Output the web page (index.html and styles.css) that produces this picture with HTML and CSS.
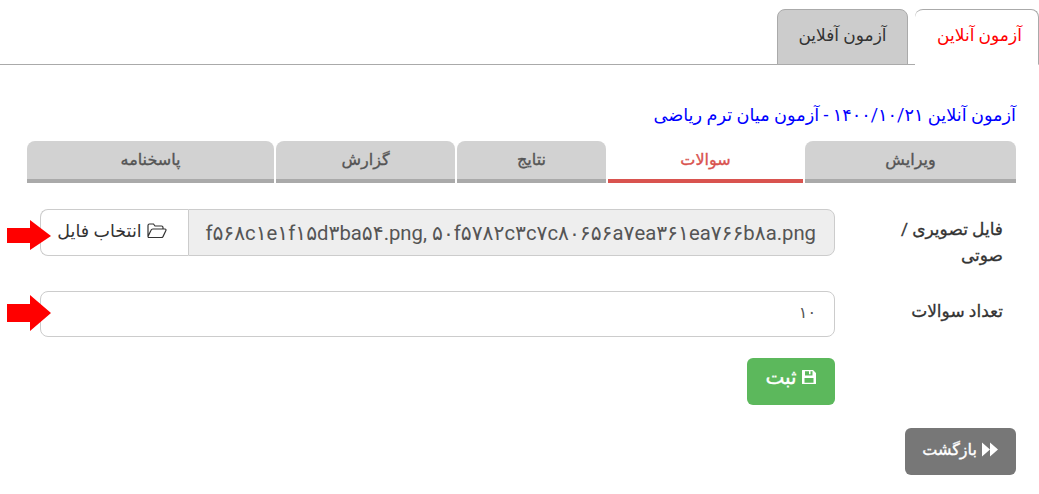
FILE: index.html
```html
<!DOCTYPE html>
<html lang="fa" dir="rtl">
<head>
<meta charset="utf-8">
<title>آزمون آنلاین</title>
<link rel="stylesheet" href="styles.css">
</head>
<body>
<nav class="main-tabs">
  <a class="main-tab active">آزمون آنلاین</a>
  <a class="main-tab">آزمون آفلاین</a>
</nav>
<main class="content">
  <h1 class="title">آزمون آنلاین ۱۴۰۰/۱۰/۲۱ - آزمون میان ترم ریاضی</h1>
  <div class="sub-tabs">
    <a class="sub-tab">ویرایش</a>
    <a class="sub-tab active">سوالات</a>
    <a class="sub-tab">نتایج</a>
    <a class="sub-tab">گزارش</a>
    <a class="sub-tab">پاسخنامه</a>
  </div>
  <form class="form">
    <div class="row row-file">
      <label class="label">فایل تصویری / صوتی</label>
      <div class="group">
        <div class="names"><bdi dir="ltr">f۵۶۸c۱e۱f۱۵d۳ba۵۴.png, ۵۰f۵۷۸۲c۳c۷c۸۰۶۵۶a۷ea۳۶۱ea۷۶۶b۸a.png</bdi></div>
        <button type="button" class="pick">
          <svg class="icon" viewBox="0 0 20 16" aria-hidden="true"><path d="M1 13.500V2.500A1.500 1.500 0 0 1 2.500 1h4L8 3h6.500A1.500 1.500 0 0 1 16 4.500V6M1 13.500 4 7.200A2 2 0 0 1 5.800 6H18a1 1 0 0 1 .9 1.500L16 13.600a2 2 0 0 1-1.700.9H2A1 1 0 0 1 1 13.500Z"/></svg>
          <span>انتخاب فایل</span>
        </button>
      </div>
    </div>
    <div class="row row-count">
      <label class="label">تعداد سوالات</label>
      <div class="field">۱۰</div>
    </div>
    <div class="actions">
      <button type="button" class="btn btn-save">
        <svg class="icon-solid" viewBox="0 0 16 16" aria-hidden="true"><path fill-rule="evenodd" d="M1.500 1H12l3 3v10.500a.5.5 0 0 1-.5.5h-13a.5.5 0 0 1-.5-.5v-13a.5.5 0 0 1 .5-.5ZM4 2.300V6.500h7.500V2.300H9.500v3H8v-3ZM3.500 9v4.700h9V9Z"/></svg>
        <span>ثبت</span>
      </button>
    </div>
  </form>
  <div class="back-row">
    <button type="button" class="btn btn-back">
      <svg class="icon-solid" viewBox="0 0 18 16" aria-hidden="true"><path d="M1 1 9 8l-8 7ZM9 1l8 7-8 7Z"/></svg>
      <span>بازگشت</span>
    </button>
  </div>
</main>
<svg class="arrow arrow-one" viewBox="0 0 44 30" aria-hidden="true"><path d="M0 8H23V0L44 16 23 30V23H0Z"/></svg>
<svg class="arrow arrow-two" viewBox="0 0 44 36" aria-hidden="true"><path d="M0 9H23V0L44 18 23 36V27H0Z"/></svg>
</body>
</html>
```
FILE: styles.css
```css
* { box-sizing: border-box; }
html, body { margin: 0; padding: 0; }
body {
  position: relative;
  width: 1039px;
  height: 494px;
  overflow: hidden;
  background: #fff;
  color: #333;
  font-family: Roboto, "DejaVu Sans", sans-serif;
  font-size: 14px;
}
.main-tabs {
  display: flex;
  gap: 7px;
  height: 65px;
  padding-top: 9px;
  border-bottom: 1px solid #aaa;
}
.main-tab {
  display: flex;
  align-items: center;
  justify-content: center;
  height: 56px;
  border: 1px solid #aaa;
  border-radius: 8px 8px 0 0;
  font-size: 17px;
  padding-bottom: 4px;
}
.main-tab.active {
  width: 124px;
  padding-left: 6px;
  color: #f00;
  background: #fff;
  border-bottom-color: #fff;
  border-left: 0;
}
.main-tab:not(.active) { width: 131px; background: #ccc; color: #333; }
.content { padding: 0 23px; }
.title {
  margin: 35px 0 0;
  height: 30px;
  line-height: 30px;
  font-size: 17.700px;
  font-weight: 400;
  color: #00f;
}
.sub-tabs {
  display: grid;
  grid-template-columns: 211px 195px 149px 179px 247px;
  gap: 2px;
  width: 989px;
  margin: 11px 0 0;
}
.sub-tab {
  display: flex;
  align-items: center;
  justify-content: center;
  height: 42px;
  padding-bottom: 2px;
  border-bottom: 4px solid #aaa;
  border-radius: 8px 8px 0 0;
  background: #d2d2d2;
  font-size: 16px;
  -webkit-text-stroke: 0.35px currentColor;
  color: #555;
}
.sub-tab.active {
  background: #fff;
  border-bottom-color: #d9534f;
  color: #d9534f;
}
.form { margin-top: 26px; padding-right: 13px; }
.row { display: flex; align-items: flex-start; }
.row-file { height: 47px; }
.row-count { margin-top: 35px; }
.label {
  width: 168px;
  padding: 7px 0 0 60px;
  line-height: 26px;
  font-size: 17px;
  -webkit-text-stroke: 0.3px currentColor;
  color: #333;
}
.group { display: flex; width: 795px; height: 47px; }
.names {
  flex: 1;
  display: flex;
  align-items: center;
  padding: 0 18px;
  background: #eee;
  border: 1px solid #ccc;
  border-radius: 0 8px 8px 0;
  font-size: 20.300px;
  color: #555;
  white-space: nowrap;
  overflow: hidden;
}
.pick {
  display: flex;
  align-items: center;
  justify-content: center;
  gap: 5px;
  width: 148px;
  height: 47px;
  padding: 0 5px 4px 0;
  background: #fff;
  border: 1px solid #ccc;
  border-right: 0;
  border-radius: 8px 0 0 8px;
  font: inherit;
  font-size: 17.500px;
  color: #333;
}
.icon { width: 20px; height: 16px; fill: none; stroke: #333; stroke-width: 1.200; }
.icon-solid { fill: #fff; flex: none; }
.field {
  display: flex;
  align-items: center;
  width: 795px;
  height: 46px;
  padding: 0 18px 3px;
  background: #fff;
  border: 1px solid #ccc;
  border-radius: 8px;
  font-size: 16px;
  color: #555;
}
.actions { margin: 21px 168px 0 0; }
.btn {
  display: inline-flex;
  align-items: center;
  justify-content: center;
  height: 47px;
  padding: 0 0 4px;
  border: 0;
  border-radius: 6px;
  font: inherit;
  font-size: 16px;
  -webkit-text-stroke: 0.35px currentColor;
  color: #fff;
}
.btn-save { gap: 4px; width: 88px; padding-bottom: 9px; background: #5cb85c; font-size: 20px; }
.btn-save .icon-solid { width: 16px; height: 16px; }
.back-row { margin-top: 23px; }
.btn-back { gap: 4px; width: 111px; background: #777; }
.btn-back .icon-solid { width: 18px; height: 17px; }
.arrow { position: absolute; left: 7px; fill: #f00; }
.arrow-one { top: 220px; width: 44px; height: 30px; }
.arrow-two { top: 295px; width: 44px; height: 36px; }
```
